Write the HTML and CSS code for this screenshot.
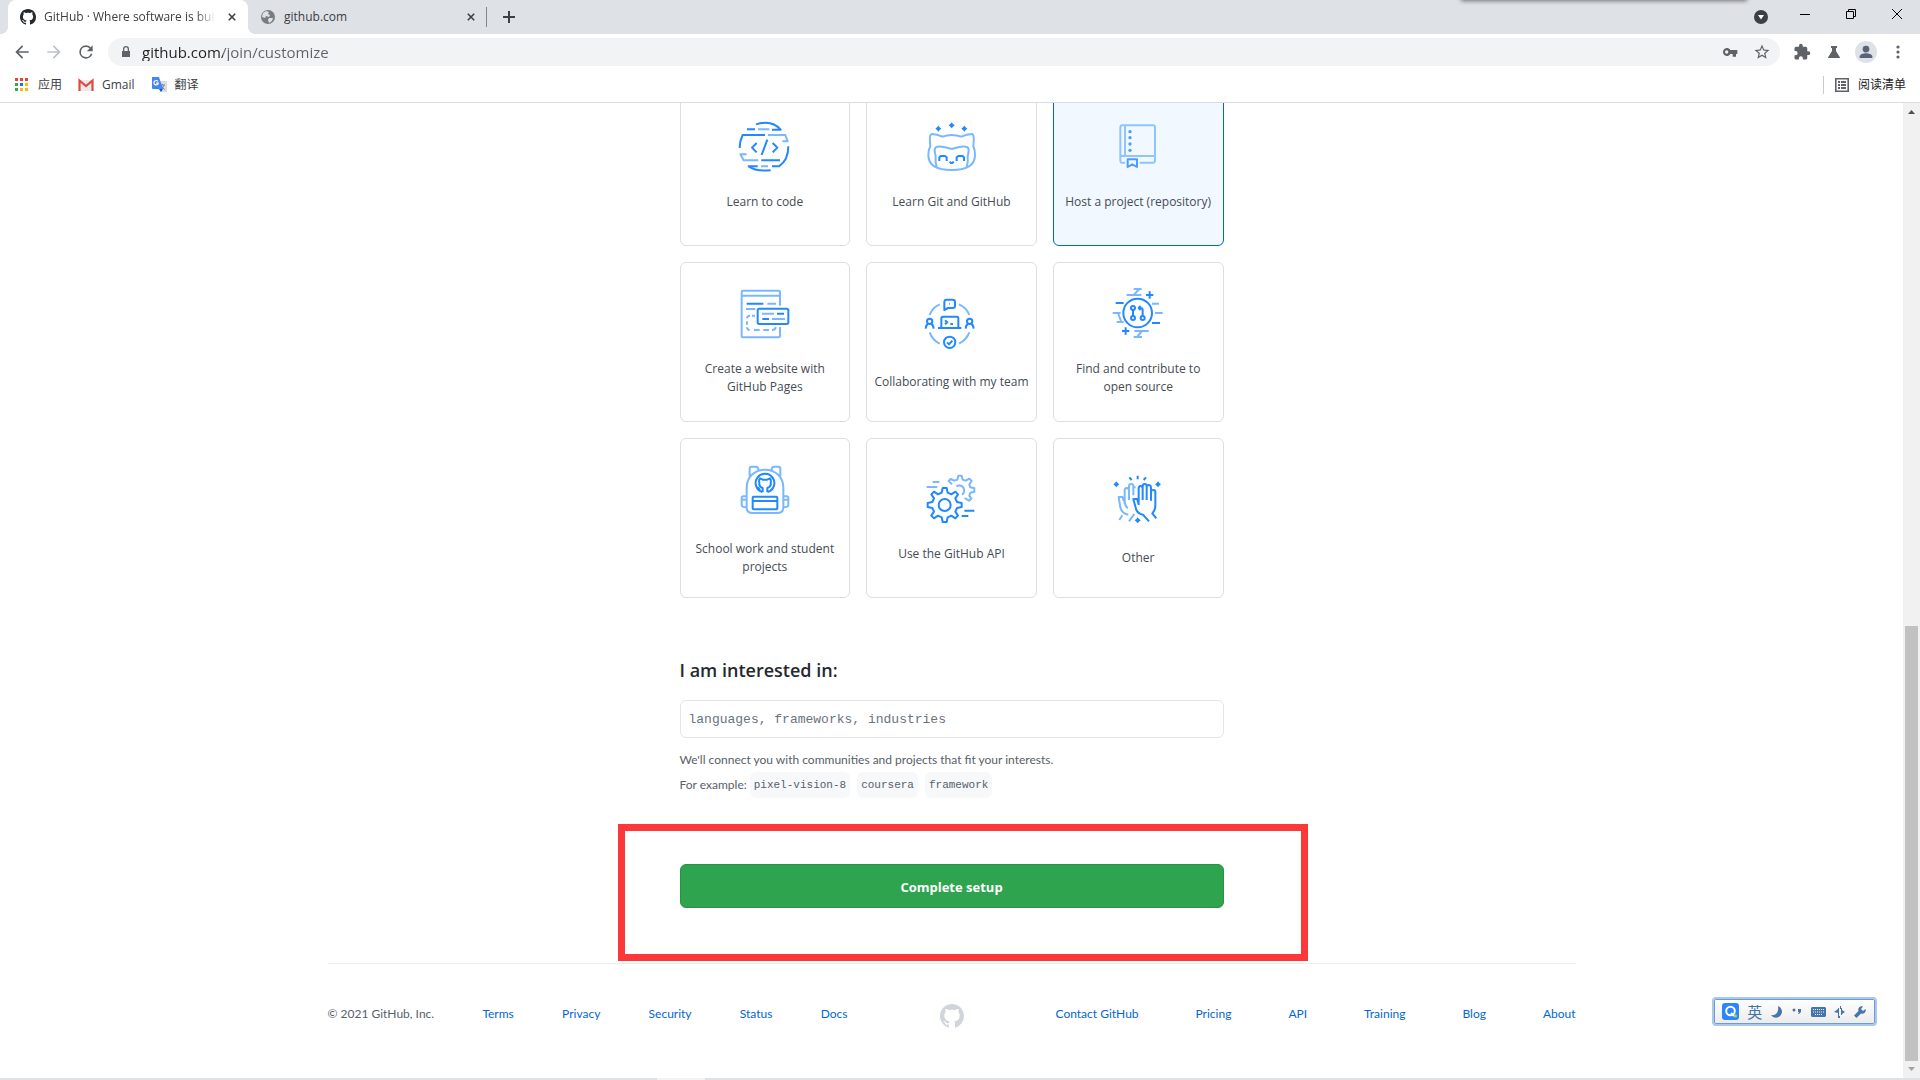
FILE: index.html
```html
<!DOCTYPE html>
<html lang="en">
<head>
<meta charset="utf-8">
<title>GitHub · Where software is built</title>
<link rel="stylesheet" href="styles.css">
</head>
<body>
<svg class="defs" aria-hidden="true">
  <symbol id="mark" viewBox="0 0 16 16"><path d="M8 0C3.58 0 0 3.58 0 8c0 3.54 2.29 6.53 5.47 7.59.4.07.55-.17.55-.38 0-.19-.01-.82-.01-1.49-2.01.37-2.53-.49-2.69-.94-.09-.23-.48-.94-.82-1.13-.28-.15-.68-.52-.01-.53.63-.01 1.08.58 1.23.82.72 1.21 1.87.87 2.33.66.07-.52.28-.87.51-1.07-1.78-.2-3.64-.89-3.64-3.95 0-.87.31-1.59.82-2.15-.08-.2-.36-1.02.08-2.12 0 0 .67-.21 2.2.82.64-.18 1.32-.27 2-.27s1.36.09 2 .27c1.53-1.04 2.2-.82 2.2-.82.44 1.1.16 1.92.08 2.12.51.56.82 1.27.82 2.15 0 3.07-1.87 3.75-3.65 3.95.29.25.54.73.54 1.48 0 1.07-.01 1.93-.01 2.2 0 .21.15.46.55.38A8.01 8.01 0 0 0 16 8c0-4.42-3.58-8-8-8z"/></symbol>
  <symbol id="cross" viewBox="0 0 10 10"><path d="M1 1l8 8M9 1L1 9" fill="none" stroke="currentColor" stroke-width="2"/></symbol>
</svg>

<header class="browser">
  <div class="tabstrip">
    <div class="tab tab-active">
      <svg class="i16"><use href="#mark"/></svg>
      <span class="tab-title">GitHub · Where software is bui</span>
      <button class="tab-close" aria-label="Close tab"><svg class="i8"><use href="#cross"/></svg></button>
    </div>
    <div class="tab">
      <svg class="i16" viewBox="0 0 16 16"><circle cx="8" cy="8" r="7" fill="#7a7d80"/><path d="M3 4l3-2 3 1-1 2 2 1-1 2-3-1-1 2-3-1zM9 9l4 0-1 3-3 2-1-3z" fill="#dee1e6"/></svg>
      <span class="tab-title">github.com</span>
      <button class="tab-close" aria-label="Close tab"><svg class="i8"><use href="#cross"/></svg></button>
    </div>
    <button class="new-tab" aria-label="New tab"><svg width="12" height="12" viewBox="0 0 12 12"><path d="M6 0v12M0 6h12" stroke="#3c4043" stroke-width="2"/></svg></button>
    <div class="window-buttons">
      <button aria-label="Search tabs" class="tab-search"><svg width="14" height="14" viewBox="0 0 14 14"><circle cx="7" cy="7" r="7" fill="#3c4043"/><path d="M4 5h6L7 9.500z" fill="#fff"/></svg></button>
      <button aria-label="Minimize"><svg width="10" height="10" viewBox="0 0 10 10"><path d="M0 5.500h10" stroke="#000"/></svg></button>
      <button aria-label="Restore"><svg width="10" height="10" viewBox="0 0 10 10"><path d="M.5 2.500h7v7h-7zM2.500 2.500v-2h7v7h-2" fill="none" stroke="#000"/></svg></button>
      <button aria-label="Close"><svg width="10" height="10" viewBox="0 0 10 10"><path d="M0 0l10 10M10 0L0 10" stroke="#000"/></svg></button>
    </div>
    <div class="window-shadow"></div>
  </div>

  <div class="toolbar">
    <button aria-label="Back"><svg class="i20" viewBox="0 0 24 24"><path d="M20 11H7.830l5.590-5.590L12 4l-8 8 8 8 1.410-1.410L7.830 13H20z"/></svg></button>
    <button aria-label="Forward" class="dim"><svg class="i20" viewBox="0 0 24 24"><path d="M12 4l-1.410 1.410L16.170 11H4v2h12.170l-5.580 5.590L12 20l8-8z"/></svg></button>
    <button aria-label="Reload"><svg class="i20" viewBox="0 0 24 24"><path d="M17.650 6.350A7.960 7.960 0 0 0 12 4a8 8 0 1 0 7.730 10h-2.080A6 6 0 1 1 12 6c1.660 0 3.140.69 4.220 1.780L13 11h7V4z"/></svg></button>
    <div class="omnibox">
      <svg class="lock" viewBox="0 0 8 12"><path d="M1 5V3a3 3 0 0 1 6 0v2h1v6H0V5zM2.300 5h3.400V3a1.700 1.700 0 0 0-3.400 0z"/></svg>
      <input class="url" type="text" aria-label="Address" value="github.com/join/customize">
      <button aria-label="Passwords"><svg class="i16" viewBox="0 0 24 24"><path d="M12.650 9A6 6 0 1 0 12.650 15H16v4h5v-4h2V9zM7 14.500A2.500 2.500 0 1 1 7 9.500a2.500 2.500 0 0 1 0 5z"/></svg></button>
      <button aria-label="Bookmark this tab"><svg class="i18" viewBox="0 0 24 24"><path d="M22 9.240l-7.190-.62L12 2 9.190 8.630 2 9.240l5.460 4.730L5.820 21 12 17.270 18.180 21l-1.630-7.030zM12 15.400l-3.760 2.270 1-4.280-3.320-2.880 4.380-.38L12 6.100l1.710 4.040 4.380.38-3.320 2.880 1 4.280z"/></svg></button>
    </div>
    <button aria-label="Extensions"><svg class="i18" viewBox="0 0 24 24"><path d="M20.500 11H19V7a2 2 0 0 0-2-2h-4V3.500a2.500 2.500 0 0 0-5 0V5H4a2 2 0 0 0-2 2v3.800h1.500a2.700 2.700 0 0 1 0 5.400H2V20a2 2 0 0 0 2 2h3.800v-1.500a2.700 2.700 0 0 1 5.400 0V22H17a2 2 0 0 0 2-2v-4h1.500a2.500 2.500 0 0 0 0-5z"/></svg></button>
    <button aria-label="Labs"><svg class="i16" viewBox="0 0 16 16"><path d="M5 2h6v2h-1v3l4 6.500V14H2v-.5L6 7V4H5z"/></svg></button>
    <button aria-label="Profile" class="avatar"><svg class="i18" viewBox="0 0 24 24"><circle cx="12" cy="8" r="4.500"/><path d="M3.500 20v-2c0-3 5-4.500 8.500-4.500s8.500 1.500 8.500 4.500v2z"/></svg></button>
    <button aria-label="Menu"><svg class="i16" viewBox="0 0 16 16"><circle cx="8" cy="3" r="1.600"/><circle cx="8" cy="8" r="1.600"/><circle cx="8" cy="13" r="1.600"/></svg></button>
  </div>

  <nav class="bookmarks">
    <a href="#"><svg class="i16" viewBox="0 0 16 16"><path d="M1 1h3v3H1zM6 1h3v3H6zM11 1h3v3h-3z" fill="#ea4335"/><path d="M1 6h3v3H1zM1 11h3v3H1z" fill="#34a853"/><path d="M6 6h3v3H6z" fill="#1a73e8"/><path d="M11 6h3v3h-3zM6 11h3v3H6zM11 11h3v3h-3z" fill="#fbbc04"/></svg>应用</a>
    <a href="#"><svg class="i16" viewBox="0 0 16 16"><path d="M2 3h12v11H2z" fill="#e8eaed"/><path d="M1.500 14V3.500L8 9l6.500-5.500V14" fill="none" stroke="#dd4b3e" stroke-width="2.200"/></svg>Gmail</a>
    <a href="#"><svg class="i16" viewBox="0 0 16 16"><path d="M6 4h10v11H9z" fill="#dadce0"/><path d="M9 8h5M11.500 7v1M13 8c-.5 2-2 3.500-3.500 4M10.500 9l3 3.500" fill="none" stroke="#80868b"/><path d="M1 0h7l4 12H2q-1 0-1-1z" fill="#4285f4"/><path d="M8 12h4l-2 3z" fill="#1a56c4"/><path d="M7 4.500A2.200 2.200 0 1 0 7.300 6.200H5.200" fill="none" stroke="#fff" stroke-width="1.200"/></svg>翻译</a>
    <a href="#" class="reading-list"><svg class="i16" viewBox="0 0 16 16"><path d="M1.800 1.800h12.400v12.400H1.800z" fill="none" stroke="#5f6368" stroke-width="1.600"/><path d="M4 4h2v2H4zM7 4h5v2H7zM4 7h2v2H4zM7 7h5v2H7zM4 10h2v2H4zM7 10h5v2H7z" fill="#5f6368"/></svg>阅读清单</a>
  </nav>
</header>

<div class="viewport">
  <main class="page">
    <form class="survey">
      <div class="tiles">
        <label class="tile"><input type="checkbox">
          <svg class="art" viewBox="201 62 168 168"><path class="d" d="M258 72Q306 57 332 88H306M231 87H255M209 143Q209 122 218 104H285M355 138Q355 180 327 198H306M274 180H330M263 198H236Q258 214 302 210M260 128L246 142L260 156M292 118L275 164M308 128L322 142L308 156"/><path class="l" d="M264 87H298M294 104H346L353 123H337M230 162H211L221 180H265M273 198H294"/></svg>
          <span>Learn to code</span></label>
        <label class="tile"><input type="checkbox">
          <svg class="art" viewBox="-50 63 168 168"><path class="l" d="M36 105Q22 105 8 110Q-8 102-24 102Q-31 104-29 125L-28 138Q-34 150-34 165C-34 200-5 210 36 210C77 210 106 200 106 165Q106 150 101 138L102 125Q104 104 97 102Q81 102 65 110Q50 105 36 105ZM36 147C15 140-2 136-12 142C-20 150-12 160-12 172Q-14 185-9 200M36 147C57 140 74 136 84 142C92 150 84 160 84 172Q86 185 81 200"/><path class="d" d="M-1 183V172L3 168H16L21 172V183M51 183V172L56 168H69L73 172V183M30 185L34 189H38L42 185"/><path class="f" d="M-4 77l4 5 5 4-5 4-4 5-4-5-5-4 5-4zM36 67l4 5 5 4-5 4-4 5-4-5-5-4 5-4zM74 77l4 5 5 4-5 4-4 5-4-5-5-4 5-4z"/></svg>
          <span>Learn Git and GitHub</span></label>
        <label class="tile tile-on"><input type="checkbox" checked>
          <svg class="art" viewBox="511 63 168 168"><path class="l" d="M556 188H546Q542 188 542 180V82Q542 76 548 76H640Q646 76 646 82V180Q646 188 640 188H600M542 168H646M556 76V168"/><path class="d" d="M564 178H592V201L578 193L564 201Z"/><g class="f"><circle cx="571" cy="95" r="5"/><circle cx="571" cy="113" r="5"/><circle cx="571" cy="132" r="5"/><circle cx="571" cy="151" r="5"/></g></svg>
          <span>Host a project (repository)</span></label>
        <label class="tile"><input type="checkbox">
          <svg class="art" viewBox="201 114 168 168"><path class="l" d="M330 167V126Q330 122 326 122H219Q215 122 215 126V257Q215 262 220 262H326Q330 262 330 258V231M215 137H330M292 161H318M228 177H256M276 191H312M306 207H345M255 197H246M240 197Q231 197 231 205M231 214V224M231 232Q231 240 239 240M252 240H269M280 240H297M306 240Q317 240 317 231"/><path class="d" d="M230 161H280M321 191H342M277 207H297"/><rect class="d" x="263" y="176" width="92" height="46" rx="5"/></svg>
          <span>Create a website with GitHub Pages</span></label>
        <label class="tile tile-tall"><input type="checkbox">
          <svg class="art" viewBox="-20 129 168 168"><path class="l" d="M30 163Q8 172 0 195M88 163Q110 172 119 195M0 247Q8 270 30 281M119 247Q110 270 88 281"/><path class="d" d="M44 180V156Q44 149 51 149H69Q76 149 76 156V168Q76 174 69 174H55ZM59 161H61M35 233V205Q35 200 40 200H82Q86 200 86 205V233M25 234H95M46 211L53 217L46 223M62 222H70M-12 236Q-11 224-5 222M12 236Q11 224 5 222M108 236Q109 224 115 222M132 236Q131 224 125 222M52 277L58 283L68 272"/><g class="d"><circle cx="0" cy="214" r="8"/><circle cx="120" cy="214" r="8"/><circle cx="60" cy="277" r="17"/></g></svg>
          <span>Collaborating with my team</span></label>
        <label class="tile"><input type="checkbox">
          <svg class="art" viewBox="541 114 168 168"><path class="l" d="M612 117H636M629 117L612 135M591 135H635M667 161H688M676 189H699M549 189H573M565 189L575 216M561 216H582M614 243H657M637 243L622 261M612 261H637"/><path class="d" d="M660 124V146M649 135H671M588 232V254M577 243H599M558 159H582M667 219H691M610 180V198M639 198V180Q639 174 632 174H628M633 168L627 174L633 180"/><g class="d"><circle cx="624" cy="189" r="43"/><circle cx="610" cy="174" r="6"/><circle cx="610" cy="204" r="6"/><circle cx="639" cy="204" r="6"/></g></svg>
          <span>Find and contribute to open&nbsp;source</span></label>
        <label class="tile tile-tall"><input type="checkbox">
          <svg class="art" viewBox="201 90 168 168"><path class="l" d="M230 232V174C230 140 255 119 285 119C315 119 340 140 340 174V232Q340 249 322 249H248Q230 249 230 232ZM239 139V116Q239 110 245 110H258Q265 110 265 120M305 120Q305 110 312 110H325Q331 110 331 116V139M230 199H220Q215 199 215 205V225Q215 232 230 232M215 209H230M340 199H350Q355 199 355 205V225Q355 232 340 232M340 209H355"/><path class="d" d="M277 186A28 28 0 1 1 293 186M278 187V174Q266 170 268 158Q266 150 270 145L278 149H292L300 145Q304 150 302 158Q304 170 292 174V187M258 171Q266 172 270 180M248 213H322"/><rect class="d" x="248" y="200" width="74" height="38" rx="3"/></svg>
          <span>School work and student projects</span></label>
        <label class="tile"><input type="checkbox">
          <svg class="art" viewBox="-20 129 168 168"><path class="l" d="M9 156H29M-9 171H23M67 163L57 153L63 147L74 152L83 149L86 137H96L99 149L108 152L119 146L126 153L119 163L122 172L134 175V185L122 188L119 197L125 206L118 212L105 204M80 169A15 15 0 1 1 97 194"/><path class="d" d="M104 242H134M96 258H116"/><g transform="translate(45 225)"><path class="d" d="M-9-37L-6-51H6L9-37L20-32L32-40L40-32L32-20L37-9L51-6V6L37 9L32 20L40 32L32 40L20 32L9 37L6 51H-6L-9 37L-20 32L-32 40L-40 32L-32 20L-37 9L-51 6V-6L-37-9L-32-20L-40-32L-32-40L-20-32Z"/><circle class="d" r="18"/></g></svg>
          <span>Use the GitHub API</span></label>
        <label class="tile tile-tall"><input type="checkbox">
          <svg class="art" viewBox="541 117 168 168"><path class="l" d="M585 222V182Q585 174 591 174Q598 174 598 182V210M598 176V168Q598 162 605 162Q611 162 611 168V196M611 172H618M583 213L578 201H567L572 232Q576 250 596 254M585 215Q586 230 595 234M578 256L569 270M614 252L598 274"/><path class="d" d="M599 142L606 150M624 137V148M649 142L642 150M627 225V176Q627 168 633 168Q639 168 639 176V210M639 176V168Q639 162 645 162Q651 162 651 168V210M651 170Q652 165 658 165Q664 166 664 174V212M664 184Q665 180 671 180Q677 180 677 186V228Q677 240 668 250L680 265M627 222L622 207H611L620 240Q626 252 640 254L658 274"/><path class="f" d="M560 154l4 5 5 4-5 4-4 5-4-5-5-4 5-4zM685 154l4 5 5 4-5 4-4 5-4-5-5-4 5-4zM624 262l4 5 5 4-5 4-4 5-4-5-5-4 5-4z"/></svg>
          <span>Other</span></label>
      </div>

      <label class="heading" for="interests">I am interested in:</label>
      <input class="interests" id="interests" type="text" placeholder="languages, frameworks, industries">
      <p class="help">We'll connect you with communities and projects that fit your interests.</p>
      <p class="help examples"><span>For example:</span><code>pixel-vision-8</code><code>coursera</code><code>framework</code></p>
      <div class="submit">
        <button class="complete" type="button">Complete setup</button>
        <div class="highlight"></div>
      </div>
    </form>

    <footer class="footer">
      <ul class="links">
        <li>© 2021 GitHub, Inc.</li>
        <li><a href="#">Terms</a></li>
        <li><a href="#">Privacy</a></li>
        <li><a href="#">Security</a></li>
        <li><a href="#">Status</a></li>
        <li><a href="#">Docs</a></li>
      </ul>
      <a href="#" class="footer-mark" aria-label="GitHub"><svg width="24" height="24"><use href="#mark"/></svg></a>
      <ul class="links">
        <li><a href="#">Contact GitHub</a></li>
        <li><a href="#">Pricing</a></li>
        <li><a href="#">API</a></li>
        <li><a href="#">Training</a></li>
        <li><a href="#">Blog</a></li>
        <li><a href="#">About</a></li>
      </ul>
    </footer>
  </main>
  <div class="scrollbar">
    <svg class="arrow" viewBox="0 0 17 17"><path d="M5 11h7L8.500 7z" fill="#505050"/></svg>
    <div class="track"><div class="thumb"></div></div>
    <svg class="arrow" viewBox="0 0 17 17"><path d="M5 6h7l-3.500 4z" fill="#a3a3a3"/></svg>
  </div>
</div>
<div class="taskbar-edge"><div class="taskbar-item"></div></div>

<div class="ime">
  <svg width="17" height="17" viewBox="0 0 17 17"><rect width="17" height="17" rx="3" fill="#2b86fb"/><circle cx="8.500" cy="8" r="4.300" fill="none" stroke="#fff" stroke-width="2"/><path d="M9 10l3 3" stroke="#fff" stroke-width="2"/><circle cx="13.500" cy="13" r="1.500" fill="#a6e22e"/></svg>
  <span>英</span>
  <svg width="14" height="14" viewBox="0 0 14 14"><path d="M8 1a6 6 0 1 1-7 9c5 1 8-3 7-9z"/></svg>
  <svg width="10" height="14" viewBox="0 0 10 14"><circle cx="2" cy="5" r="1.500"/><path d="M6 4h3v3L7 9H6l1-2H6z"/></svg>
  <svg width="15" height="10" viewBox="0 0 15 10"><path d="M1 0h13l1 1v8l-1 1H1L0 9V1z"/><path d="M2 2.500h11M2 5h11M4 7.500h7" stroke="#f4f4f4" stroke-dasharray="1 1"/></svg>
  <svg width="12" height="12" viewBox="0 0 12 12"><path d="M4 2h1v8H4V7L0 6l4-3zM7 2h1v2l3 2-3 2v1H7zM6 0h1v3H6zM4 10h2v2H4z"/></svg>
  <svg width="12" height="12" viewBox="0 0 12 12"><path d="M11.500 3L9 5 7 3l2-2.500A3.500 3.500 0 0 0 4.500 5L0 9.500 2.500 12 7 7.500A3.500 3.500 0 0 0 11.500 3z"/></svg>
</div>
</body>
</html>
```
FILE: styles.css
```css
*, *::before, *::after { box-sizing: border-box; }

body {
  margin: 0;
  height: 100vh;
  display: flex;
  flex-direction: column;
  overflow: hidden;
  background: #fff;
  color: #24292e;
  font-family: Lato, "Noto Sans CJK SC", sans-serif;
  font-size: 12px;
  line-height: 18px;
}

svg { display: block; flex: none; }
button {
  display: flex;
  align-items: center;
  justify-content: center;
  flex: none;
  padding: 0;
  border: 0;
  background: none;
  color: inherit;
  font: inherit;
}
a { text-decoration: none; }
p, ul { margin: 0; padding: 0; }
li { list-style: none; }
.defs { position: absolute; width: 0; height: 0; }
.i8 { width: 8px; height: 8px; }
.i16 { width: 16px; height: 16px; }
.i18 { width: 18px; height: 18px; }
.i20 { width: 20px; height: 20px; }

.browser, .tile, .heading, .complete { font-family: "Open Sans", "Noto Sans CJK SC", sans-serif; }

/* Browser chrome */
.browser { flex: none; border-bottom: 1px solid #dadce0; color: #3c4043; }
.tabstrip {
  position: relative;
  display: flex;
  height: 34px;
  padding-left: 8px;
  background: #dee1e6;
}
.tab {
  display: flex;
  align-items: center;
  gap: 8px;
  width: 238px;
  height: 34px;
  padding: 0 7px 0 12px;
}
.tab .i16 { fill: #24292e; }
.tab-active { position: relative; width: 240px; padding-right: 8px; background: #fff; border-radius: 8px 8px 0 0; }
.tab-active::before, .tab-active::after {
  content: "";
  position: absolute;
  bottom: 0;
  width: 8px;
  height: 8px;
}
.tab-active::before { left: -8px; background: radial-gradient(circle at 0 0, transparent 8px, #fff 8px); }
.tab-active::after { right: -8px; background: radial-gradient(circle at 100% 0, transparent 8px, #fff 8px); }
.tab-title { flex: 1; white-space: nowrap; }
.tab-active .tab-title { -webkit-mask-image: linear-gradient(90deg, #000 88%, transparent); mask-image: linear-gradient(90deg, #000 88%, transparent); }
.tab-close { width: 16px; height: 16px; }
.new-tab { width: 44px; height: 20px; margin-top: 7px; border-left: 1px solid #80868b; }
.window-buttons { display: flex; margin-left: auto; height: 28px; }
.window-buttons button { width: 46px; }
.window-buttons .tab-search { width: 42px; height: 34px; }
.window-shadow {
  position: absolute;
  top: -4px;
  right: 174px;
  width: 284px;
  height: 4px;
  box-shadow: 0 0 4px 1px #707276;
}
.toolbar {
  display: flex;
  align-items: center;
  height: 36px;
  padding: 0 6px;
  fill: #5f6368;
}
.toolbar > button { width: 32px; height: 32px; }
.toolbar .dim { fill: #bdc1c6; }
.omnibox {
  display: flex;
  flex: 1;
  align-items: center;
  height: 28px;
  margin: 0 6px;
  padding-left: 14px;
  border-radius: 14px;
  background: #f1f3f4;
}
.omnibox button { width: 32px; height: 28px; }
.omnibox button:last-child { margin-right: 2px; }
.lock { width: 8px; height: 12px; }
.url {
  flex: 1;
  padding: 0;
  margin-left: 12px;
  border: 0;
  outline: 0;
  font: inherit;
  font-size: 15px;
  color: transparent;
  background: linear-gradient(90deg, #202124 81px, #5f6368 81px);
  -webkit-background-clip: text;
  background-clip: text;
}
.toolbar .avatar { fill: #5a6478; }
.avatar svg { padding: 2px; width: 22px; height: 22px; border-radius: 50%; background: #dee1e6; }
.bookmarks { display: flex; height: 32px; padding: 0 14px 2px; gap: 16px; align-items: center; }
.bookmarks a { display: flex; align-items: center; gap: 8px; color: #3c4043; }
.bookmarks .reading-list { margin-left: auto; padding-left: 10px; border-left: 1px solid #c8cacd; color: #202124; }

/* Scrolled page */
.viewport { display: flex; flex: 1; min-height: 0; }
.page {
  display: flex;
  flex: 1;
  flex-direction: column;
  align-items: center;
  justify-content: flex-end;
  overflow: hidden;
}
.survey { flex: none; width: 544px; max-width: 100%; }
.tiles { display: grid; grid-template-columns: repeat(3, 1fr); gap: 16px; }
.tile {
  display: flex;
  flex-direction: column;
  align-items: center;
  justify-content: center;
  gap: 16px;
  height: 160px;
  padding: 0 6px;
  border: 1px solid #dcdee1;
  border-radius: 6px;
  color: #444c54;
  font-weight: 500;
  text-align: center;
}
.tile-tall { gap: 24px; }
.tile-on { border-color: #0366d6; background: #f1f8ff; }
.tile-on .art { opacity: 0.8; }
.tile input { position: absolute; opacity: 0; pointer-events: none; }
.art { width: 56px; height: 56px; }
.art .d, .art .l { fill: none; stroke: #2188ff; stroke-width: 6; stroke-linejoin: round; }
.art .l { stroke: #79b8ff; }
.art .f { fill: #2188ff; }
.heading {
  display: block;
  margin: 57px 0 15px;
  font-size: 18px;
  line-height: 30px;
  font-weight: 600;
}
.interests {
  display: block;
  width: 100%;
  height: 38px;
  padding: 0 8px;
  border: 1px solid #e1e4e8;
  border-radius: 6px;
  font: 13px "Liberation Mono", monospace;
}
.interests::placeholder { color: #6a737d; }
.help { margin-top: 13px; color: #586069; }
.examples { display: flex; align-items: center; gap: 7px; height: 26px; margin-top: 3px; white-space: nowrap; }
.examples span { margin-right: -4px; }
code {
  padding: 4px;
  border-radius: 6px;
  background: #f6f8fa;
  font: 11px/18px "Liberation Mono", monospace;
}
.submit { position: relative; margin: 66px 0 55px; }
.complete {
  width: 100%;
  height: 44px;
  padding-top: 2px;
  border: 1px solid #2a9147;
  border-radius: 6px;
  background: #2ea44f;
  color: #fff;
  font-size: 13px;
  font-weight: 700;
}
.highlight {
  position: absolute;
  inset: -40px -84px -53px -62px;
  border: 7px solid #fc3838;
  pointer-events: none;
}
.footer {
  display: flex;
  flex: none;
  width: 1248px;
  max-width: 100%;
  padding: 40px 0 50px;
  border-top: 1px solid #eaecef;
  line-height: 20px;
  color: #586069;
}
.links { display: flex; flex: 5; justify-content: space-between; white-space: nowrap; }
.links a { color: #0366d6; }
.footer-mark { display: flex; flex: 2; justify-content: center; fill: #d1d5da; }

.scrollbar { display: flex; flex-direction: column; width: 17px; background: #f1f1f1; }
.arrow { width: 17px; height: 17px; }
.track { display: flex; flex: 1; flex-direction: column; padding: 0 2px; }
.track::before { content: ""; flex: 506; }
.thumb { flex: 435; background: #c1c1c1; }
.taskbar-edge { flex: none; height: 2px; padding-left: 657px; background: #e0e1e3; }
.taskbar-item { width: 48px; height: 2px; background: #f3f3f4; }

/* Floating input-method bar */
.ime {
  position: absolute;
  right: 43px;
  bottom: 54px;
  display: flex;
  align-items: center;
  justify-content: space-between;
  width: 165px;
  height: 29px;
  padding: 0 9px 0 8px;
  border: 2px solid #a9c8ea;
  border-radius: 4px;
  box-shadow: inset 0 0 0 1px #6f9cd0;
  background: linear-gradient(#fff, #ebebeb);
  color: #4676a9;
  fill: #4676a9;
  font-size: 15px;
}
```
